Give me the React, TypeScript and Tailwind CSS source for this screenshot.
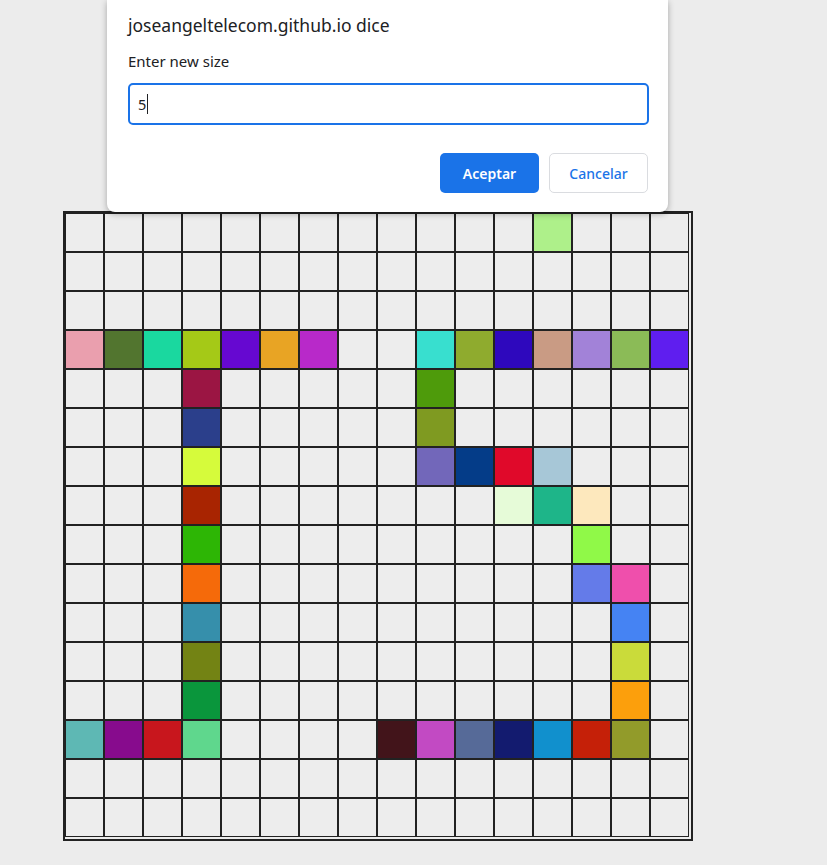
import React from "react";

const E = "";
const grid: string[][] = Array.from({ length: 16 }, () => Array(16).fill(E));
const set = (r: number, c: number, col: string) => {
  grid[r][c] = col;
};
set(0, 12, "#aef08a");
["#ea9fae", "#52752f", "#1ad89f", "#a5c917", "#6608d1", "#e8a424", "#b829c9"].forEach((c, i) => set(3, i, c));
["#38dfcf", "#8fab2e", "#2e08bd", "#c99b84", "#a282d8", "#8bbb57", "#5f1eef"].forEach((c, i) => set(3, 9 + i, c));
set(4, 3, "#9b1543");
set(4, 9, "#4e9b0b");
set(5, 3, "#2b3f8b");
set(5, 9, "#7f9a21");
set(6, 3, "#d6fb3b");
["#7267ba", "#043c88", "#e0092a", "#a7c7d7"].forEach((c, i) => set(6, 9 + i, c));
set(7, 3, "#a82401");
["#e6fbd8", "#1eb589", "#fde8bd"].forEach((c, i) => set(7, 11 + i, c));
set(8, 3, "#2db605");
set(8, 13, "#90f948");
set(9, 3, "#f56a0a");
set(9, 13, "#647be9");
set(9, 14, "#ef4fac");
set(10, 3, "#368fab");
set(10, 14, "#4583f3");
set(11, 3, "#738314");
set(11, 14, "#cadb3a");
set(12, 3, "#0a963c");
set(12, 14, "#fc9f0c");
["#5eb8b4", "#870b8d", "#c8161d", "#5fd78d"].forEach((c, i) => set(13, i, c));
["#42141a", "#c24ac3", "#566a98", "#131b6f", "#1190cd", "#c52008", "#929b2a"].forEach((c, i) => set(13, 8 + i, c));

export default function App() {
  return (
    <div className="relative min-h-[865px] w-full bg-[#ececec] overflow-hidden" style={{ fontFamily: '"Noto Sans", "Open Sans", sans-serif' }}>
      <div className="pt-[211px] pl-[63px]">
        <div className="flex flex-wrap content-start w-[630px] h-[630px] border-2 border-[#222222]">
          {grid.flatMap((row, r) =>
            row.map((c, ci) => (
              <div
                key={`${r}-${ci}`}
                className="w-[39px] h-[39px] border border-[#222222]"
                style={{ backgroundColor: c || "#ededed" }}
              />
            ))
          )}
        </div>
      </div>

      <div className="absolute left-[107px] top-0 w-[561px] h-[212px] bg-white rounded-b-[8px] shadow-[0_2px_6px_rgba(0,0,0,0.3)] pl-[21px] pr-[20px] pt-[11px] flex flex-col">
        <div className="text-[17.5px] leading-[28px] text-[#202124]">joseangeltelecom.github.io dice</div>
        <div className="mt-[12px] text-[15px] leading-[21px] text-[#202124]">Enter new size</div>
        <div className="mt-[11px] h-[42px] w-[521px] border-2 border-[#1a73e8] rounded-[5px] flex items-center pl-[8px]">
          <span className="text-[14.5px] text-[#202124] leading-none">5</span>
          <span className="ml-[1px] w-[1px] h-[20px] bg-[#202124]" />
        </div>
        <div className="mt-[28px] flex justify-end gap-[10px]">
          <div className="w-[99px] h-[40px] rounded-[5px] bg-[#1a73e8] text-white text-[14px] font-semibold flex items-center justify-center">
            Aceptar
          </div>
          <div className="w-[99px] h-[40px] rounded-[5px] bg-white border border-[#dadce0] text-[#1a73e8] text-[14px] font-medium flex items-center justify-center">
            Cancelar
          </div>
        </div>
      </div>
    </div>
  );
}
